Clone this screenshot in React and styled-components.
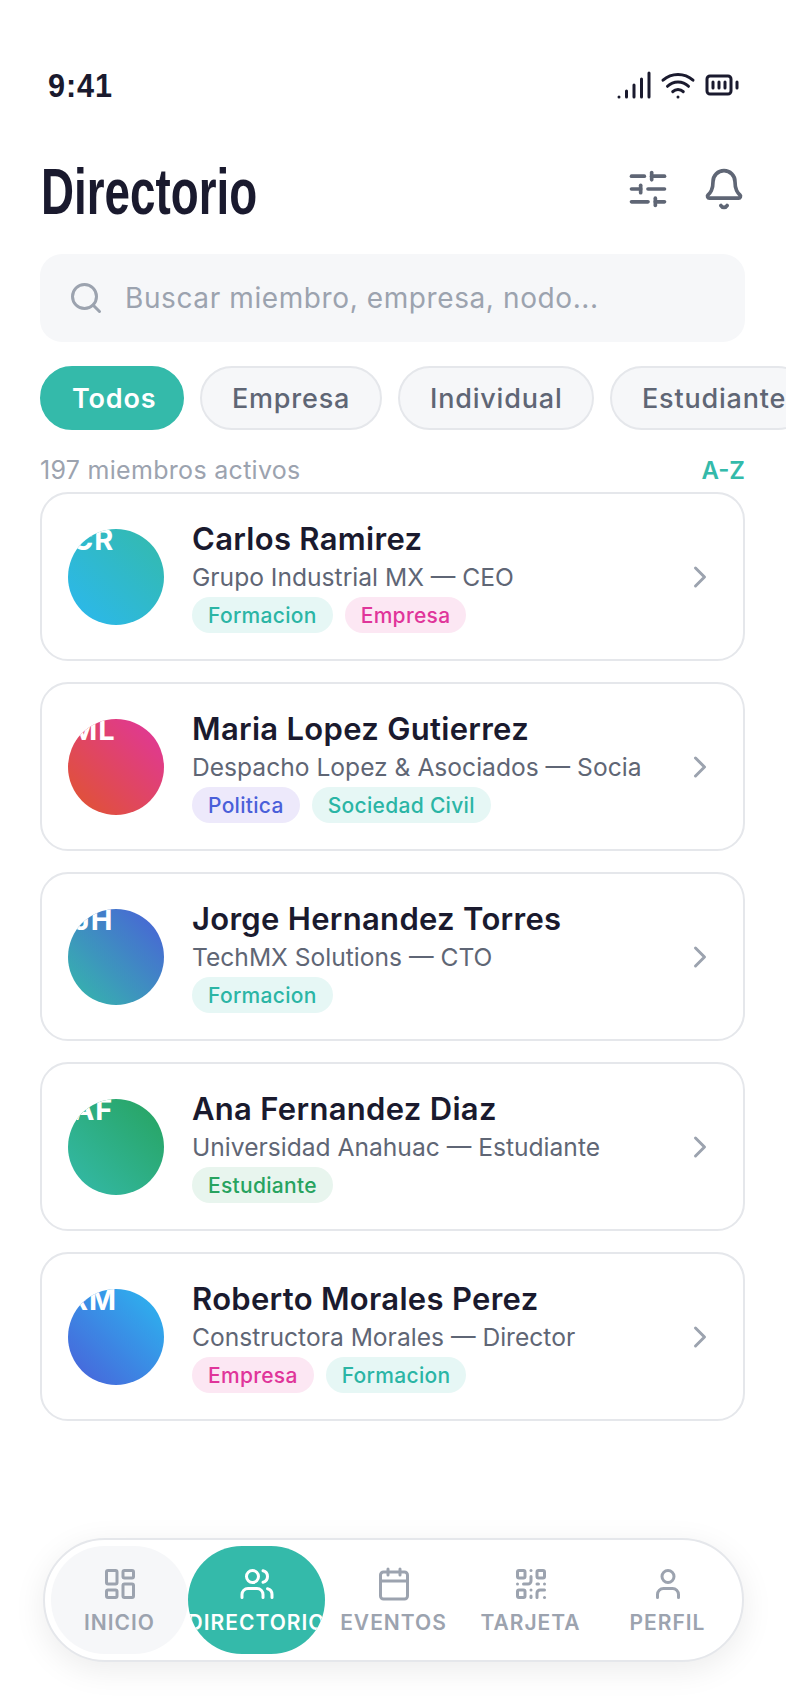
import styled, { createGlobalStyle } from "styled-components";
import {
  Signal, Wifi, BatteryFull, SlidersHorizontal, Bell, Search, ChevronRight,
  LayoutDashboard, Users, Calendar, QrCode, User,
} from "lucide-react";

const Global = createGlobalStyle`
  html, body { margin: 0; padding: 0; background: #fff; }
  body { font-family: Inter, "Liberation Sans", sans-serif; }
  * { box-sizing: border-box; }
`;

const TEAL = "#34baaa";

const tagColors = {
  Formacion: ["#e6f7f5", "#2bb5a5"],
  Empresa: ["#fce7f3", "#e0359a"],
  Politica: ["#ede9fb", "#4a5fd9"],
  "Sociedad Civil": ["#e6f7f5", "#2bb5a5"],
  Estudiante: ["#e8f5ee", "#27a35f"],
};

const members = [
  { initials: "CR", name: "Carlos Ramirez", sub: "Grupo Industrial MX — CEO", tags: ["Formacion", "Empresa"], from: "#34baaa", to: "#2bb8f0" },
  { initials: "ML", name: "Maria Lopez Gutierrez", sub: "Despacho Lopez & Asociados — Socia", tags: ["Politica", "Sociedad Civil"], from: "#e0359f", to: "#e0552c" },
  { initials: "JH", name: "Jorge Hernandez Torres", sub: "TechMX Solutions — CTO", tags: ["Formacion"], from: "#4a5fd9", to: "#34baaa" },
  { initials: "AF", name: "Ana Fernandez Diaz", sub: "Universidad Anahuac — Estudiante", tags: ["Estudiante"], from: "#27a35f", to: "#34baaa" },
  { initials: "RM", name: "Roberto Morales Perez", sub: "Constructora Morales — Director", tags: ["Empresa", "Formacion"], from: "#2bb8f0", to: "#4a5fd9" },
];

const chips = [
  { label: "Todos", width: 144, active: true },
  { label: "Empresa", width: 182 },
  { label: "Individual", width: 196 },
  { label: "Estudiante", width: 200 },
];

const navItems = [
  { label: "INICIO", Icon: LayoutDashboard, variant: "soft" },
  { label: "DIRECTORIO", Icon: Users, variant: "active" },
  { label: "EVENTOS", Icon: Calendar },
  { label: "TARJETA", Icon: QrCode },
  { label: "PERFIL", Icon: User },
];

function App() {
  return (
    <Page>
      <Global />
      <StatusBar>
        <Clock>9:41</Clock>
        <StatusIcons>
          <Signal size={36} strokeWidth={2} />
          <Wifi size={36} strokeWidth={2} />
          <BatteryFull size={36} strokeWidth={2} />
        </StatusIcons>
      </StatusBar>

      <Header>
        <Title>Directorio</Title>
        <HeaderIcons>
          <SlidersHorizontal size={44} strokeWidth={2} />
          <Bell size={44} strokeWidth={2} />
        </HeaderIcons>
      </Header>

      <SearchBox>
        <Search size={36} strokeWidth={2} color="#9ca3af" />
        <SearchText>Buscar miembro, empresa, nodo...</SearchText>
      </SearchBox>

      <Chips>
        {chips.map((c) => (
          <Chip key={c.label} $active={c.active} $width={c.width}>{c.label}</Chip>
        ))}
      </Chips>

      <CountRow>
        <Count>197 miembros activos</Count>
        <Sort>A-Z</Sort>
      </CountRow>

      <List>
        {members.map((m) => (
          <Card key={m.name}>
            <Avatar $from={m.from} $to={m.to}>
              <Initials>{m.initials}</Initials>
            </Avatar>
            <Info>
              <Name>{m.name}</Name>
              <Sub>{m.sub}</Sub>
              <Tags>
                {m.tags.map((t) => (
                  <Tag key={t} $bg={tagColors[t][0]} $fg={tagColors[t][1]}>{t}</Tag>
                ))}
              </Tags>
            </Info>
            <ChevronRight size={36} strokeWidth={2} color="#9ca3af" />
          </Card>
        ))}
      </List>

      <Nav>
        {navItems.map(({ label, Icon, variant }) => (
          <NavItem key={label} $variant={variant}>
            <Icon size={36} strokeWidth={2} />
            <NavLabel>{label}</NavLabel>
          </NavItem>
        ))}
      </Nav>
    </Page>
  );
}

const Page = styled.div`
  position: relative;
  width: 786px;
  height: 1704px;
  overflow: hidden;
  background: #fff;
`;

const StatusBar = styled.div`
  height: 48px;
  margin-top: 61px;
  padding: 0 46px 0 48px;
  display: flex;
  align-items: center;
  justify-content: space-between;
`;

const Clock = styled.div`
  font-family: "Liberation Sans", sans-serif;
  font-weight: 700;
  font-size: 34px;
  letter-spacing: 1px;
  color: #1a1a2e;
  transform: scaleX(0.9);
  transform-origin: left center;
`;

const StatusIcons = styled.div`
  display: flex;
  align-items: center;
  gap: 8px;
  color: #1a1a2e;
`;

const Header = styled.div`
  margin-top: 47px;
  padding: 0 40px 0 41px;
  height: 66px;
  display: flex;
  align-items: center;
  justify-content: space-between;
`;

const Title = styled.h1`
  margin: 0;
  padding-top: 5px;
  font-family: "Liberation Sans", sans-serif;
  font-weight: 700;
  font-size: 64px;
  line-height: 66px;
  color: #1a1a2e;
  transform: scaleX(0.715);
  transform-origin: left center;
`;

const HeaderIcons = styled.div`
  display: flex;
  align-items: center;
  gap: 32px;
  color: #5f6675;
`;

const SearchBox = styled.div`
  margin: 32px 41px 0 40px;
  height: 88px;
  padding: 0 28px;
  display: flex;
  align-items: center;
  gap: 21px;
  background: #f6f7f9;
  border-radius: 22px;
`;

const SearchText = styled.span`
  font-size: 28px;
  letter-spacing: 0.6px;
  color: #9ca3af;
`;

const Chips = styled.div`
  margin-top: 24px;
  padding-left: 40px;
  display: flex;
  gap: 16px;
`;

const Chip = styled.div`
  flex: none;
  width: ${(p) => p.$width}px;
  height: 64px;
  display: flex;
  align-items: center;
  padding-left: 30px;
  border-radius: 32px;
  font-size: 27px;
  letter-spacing: 0.8px;
  white-space: nowrap;
  font-weight: ${(p) => (p.$active ? 600 : 500)};
  color: ${(p) => (p.$active ? "#fff" : "#5f6675")};
  background: ${(p) => (p.$active ? TEAL : "#f6f7f9")};
  border: 2px solid ${(p) => (p.$active ? TEAL : "#e5e7eb")};
`;

const CountRow = styled.div`
  margin-top: 24px;
  padding: 0 41px 0 40px;
  height: 32px;
  display: flex;
  align-items: center;
  justify-content: space-between;
`;

const Count = styled.span`
  font-size: 25px;
  letter-spacing: 0.3px;
  color: #9ca3af;
`;

const Sort = styled.span`
  font-size: 24px;
  font-weight: 600;
  color: ${TEAL};
`;

const List = styled.div`
  margin: 6px 41px 0 40px;
  display: flex;
  flex-direction: column;
  gap: 21px;
`;

const Card = styled.div`
  height: 169px;
  padding: 0 25px 0 26px;
  display: flex;
  align-items: center;
  gap: 28px;
  background: #fff;
  border: 2px solid #e5e7eb;
  border-radius: 28px;
`;

const Avatar = styled.div`
  flex: none;
  width: 96px;
  height: 96px;
  border-radius: 50%;
  overflow: hidden;
  background: linear-gradient(225deg, ${(p) => p.$from}, ${(p) => p.$to});
`;

const Initials = styled.div`
  width: 50px;
  text-align: center;
  margin-top: -7px;
  font-size: 29px;
  line-height: 36px;
  font-weight: 700;
  letter-spacing: 1px;
  white-space: nowrap;
  color: #fff;
`;

const Info = styled.div`
  flex: 1;
  min-width: 0;
  display: flex;
  flex-direction: column;
`;

const Name = styled.div`
  font-size: 31px;
  letter-spacing: 0.3px;
  line-height: 38px;
  font-weight: 600;
  color: #1a1a2e;
`;

const Sub = styled.div`
  font-size: 24.6px;
  line-height: 32px;
  margin-top: 3px;
  color: #5f6675;
`;

const Tags = styled.div`
  margin-top: 4px;
  display: flex;
  gap: 12px;
`;

const Tag = styled.span`
  height: 36px;
  padding: 0 16px;
  display: flex;
  align-items: center;
  border-radius: 18px;
  font-size: 21px;
  letter-spacing: 0.3px;
  font-weight: 500;
  background: ${(p) => p.$bg};
  color: ${(p) => p.$fg};
`;

const Nav = styled.nav`
  position: absolute;
  left: 43px;
  top: 1538px;
  width: 701px;
  height: 124px;
  padding: 6px;
  display: grid;
  grid-template-columns: repeat(5, 137px);
  background: #fff;
  border: 2px solid #e5e7eb;
  border-radius: 62px;
  box-shadow: 0 8px 32px rgba(0, 0, 0, 0.08);
`;

const NavItem = styled.div`
  height: 108px;
  overflow: hidden;
  display: flex;
  flex-direction: column;
  align-items: center;
  justify-content: center;
  gap: 8px;
  border-radius: 54px;
  color: ${(p) => (p.$variant === "active" ? "#fff" : "#9ca3af")};
  background: ${(p) =>
    p.$variant === "active" ? TEAL : p.$variant === "soft" ? "#f6f7f9" : "transparent"};
`;

const NavLabel = styled.span`
  flex: none;
  white-space: nowrap;
  font-size: 21px;
  font-weight: 600;
  letter-spacing: 1px;
`;

export default App;
